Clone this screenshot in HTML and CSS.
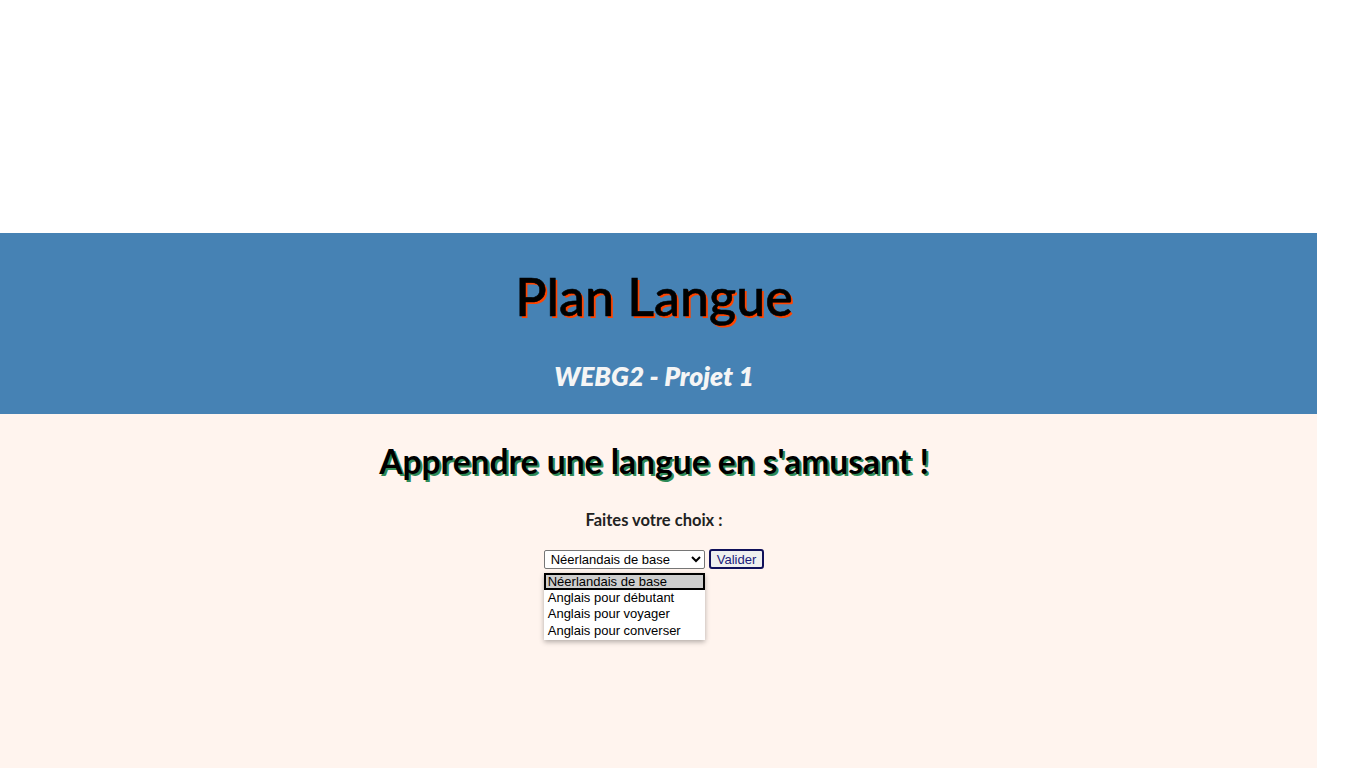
FILE: index.html
```html
<!DOCTYPE html>
<html lang="fr">
<head>
<meta charset="utf-8">
<title>Plan Langue</title>
<link rel="stylesheet" href="styles.css">
</head>
<body>
<div class="page">
  <div class="top-space"></div>
  <header class="banner">
    <h1 class="title">Plan Langue</h1>
    <h3 class="subtitle">WEBG2 - Projet 1</h3>
  </header>
  <main class="content">
    <h2 class="slogan">Apprendre une langue en s'amusant !</h2>
    <p class="prompt">Faites votre choix :</p>
    <form class="choice">
      <div class="select-wrap">
        <select class="lang-select">
          <option>Néerlandais de base</option>
          <option>Anglais pour débutant</option>
          <option>Anglais pour voyager</option>
          <option>Anglais pour converser</option>
        </select>
        <ul class="dropdown">
          <li class="opt selected">Néerlandais de base</li>
          <li class="opt">Anglais pour débutant</li>
          <li class="opt">Anglais pour voyager</li>
          <li class="opt">Anglais pour converser</li>
        </ul>
      </div>
      <button type="button" class="btn">Valider</button>
    </form>
  </main>
</div>
</body>
</html>
```
FILE: styles.css
```css
html, body {
  margin: 0;
  padding: 0;
  background: #ffffff;
}
.page {
  width: 1317px;
  height: 768px;
  display: flex;
  flex-direction: column;
  font-family: "Lato", "Open Sans", sans-serif;
}
.top-space {
  height: 233px;
  background: #ffffff;
}
.banner {
  height: 181px;
  background: #4682b4;
  display: flex;
  flex-direction: column;
  align-items: center;
  padding-right: 9px;
}
.title {
  margin: 33px 0 0;
  font-size: 52px;
  font-weight: 500;
  line-height: 60px;
  color: #000;
  text-shadow: 2px 2px 0 #ff4500;
  -webkit-text-stroke: 0.6px #000;
}
.subtitle {
  margin: 35px 0 0;
  font-size: 26.5px;
  font-style: italic;
  font-weight: 800;
  line-height: 30px;
  color: #f5f5f5;
}
.content {
  flex: 1;
  background: #fff4ee;
  display: flex;
  flex-direction: column;
  align-items: center;
  padding-right: 9px;
}
.slogan {
  margin: 26px 0 0;
  font-size: 33.6px;
  font-weight: 700;
  line-height: 42px;
  color: #000;
  text-shadow: 2px 2px 0 #2e8b57;
}
.prompt {
  margin: 29px 0 0;
  font-size: 16.5px;
  font-weight: 700;
  line-height: 18px;
  color: #222;
}
.choice {
  margin-top: 20px;
  display: flex;
  align-items: center;
  gap: 4px;
  font-family: "Liberation Sans", Arial, sans-serif;
}
.select-wrap {
  position: relative;
}
.lang-select {
  width: 161px;
  height: 19px;
  font-family: "Liberation Sans", Arial, sans-serif;
  font-size: 13px;
  border: 1px solid #767676;
  border-radius: 2px;
  background: #fff;
  color: #000;
  padding: 0 0 0 2px;
  display: block;
}
.dropdown {
  position: absolute;
  left: 0;
  top: 23px;
  width: 161px;
  margin: 0;
  padding: 0 0 1px;
  list-style: none;
  background: #fff;
  box-shadow: 0 2px 5px rgba(0,0,0,0.3);
  font-size: 13px;
  line-height: 16px;
  color: #000;
}
.opt {
  padding: 0 4px;
  height: 16.5px;
  box-sizing: border-box;
  white-space: nowrap;
}
.opt.selected {
  background: #cecece;
  border: 2px solid #000;
  padding: 0 2px;
  height: 17px;
  line-height: 13px;
}
.btn {
  height: 20px;
  padding: 0 6px;
  font-family: "Liberation Sans", Arial, sans-serif;
  font-size: 13px;
  color: #1a1a7a;
  background: #efefef;
  border: 2px solid #10105a;
  border-radius: 3px;
}
```
